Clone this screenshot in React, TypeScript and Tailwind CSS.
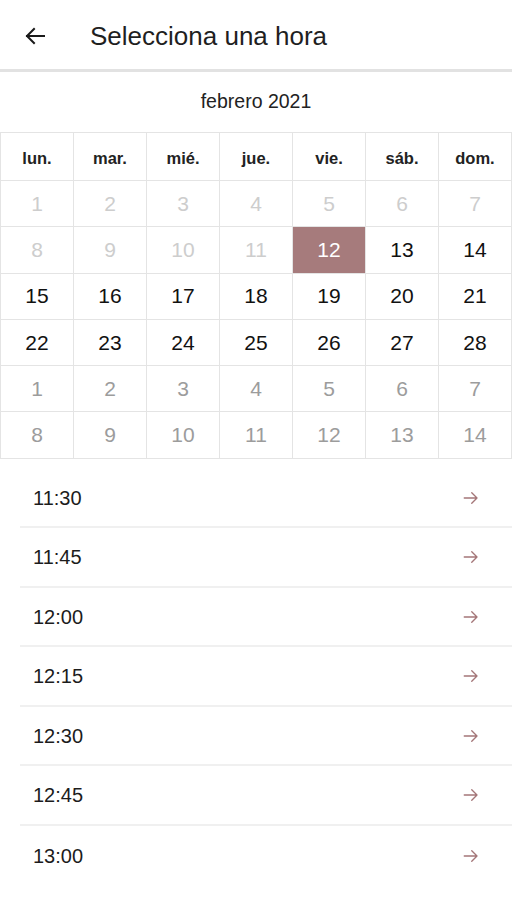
import React, { useState } from "react";

type Day = { n: number; tone: "off" | "on" | "next" };

const WEEKDAYS = ["lun.", "mar.", "mié.", "jue.", "vie.", "sáb.", "dom."];
const TIMES = ["11:30", "11:45", "12:00", "12:15", "12:30", "12:45", "13:00"];

// February 2021 starts on a Monday, 28 days, then a trailing fortnight of March
function buildDays(): Day[] {
  const days: Day[] = [];
  for (let i = 1; i <= 28; i++) days.push({ n: i, tone: i < 12 ? "off" : "on" });
  for (let i = 1; i <= 14; i++) days.push({ n: i, tone: "next" });
  return days;
}

const BackIcon = () => (
  <svg width="24" height="24" viewBox="0 0 24 24" fill="none" stroke="#1a1a1a" strokeWidth="2" strokeLinecap="square">
    <path d="M21 12H4M11 5l-7 7 7 7" />
  </svg>
);

const ArrowIcon = () => (
  <svg width="18" height="18" viewBox="0 0 24 24" fill="none" stroke="#a47678" strokeWidth="1.8" strokeLinecap="round" strokeLinejoin="round">
    <path d="M3 12h17M13 5l7 7-7 7" />
  </svg>
);

export default function App() {
  const [selected, setSelected] = useState(12);
  const days = buildDays();

  return (
    <div className="w-[512px] h-[900px] bg-white overflow-hidden" style={{ fontFamily: '"Liberation Sans", Arial, sans-serif' }}>
      {/* top bar */}
      <div className="h-[72px] flex items-center pt-[3px] border-b-[3px] border-[#e2e2e2]">
        <button className="ml-[23px] w-[24px] h-[24px] flex items-center justify-center">
          <BackIcon />
        </button>
        <h1 className="ml-[43px] text-[26px] text-[#1f1f1f]">Selecciona una hora</h1>
      </div>

      <div className="h-[60px] flex items-center justify-center text-[19.5px] text-[#222]">febrero 2021</div>

      {/* calendar */}
      <div className="grid grid-cols-7 border-t border-l border-[#e4e4e4]">
        {WEEKDAYS.map((d) => (
          <div key={d} className="h-[48px] flex items-center justify-center pt-[3px] border-r border-b border-[#e4e4e4] text-[16.5px] font-bold text-[#222]">
            {d}
          </div>
        ))}
        {days.map((d, i) => {
          const isSel = d.tone === "on" && d.n === selected;
          return (
            <div
              key={i}
              onClick={() => d.tone === "on" && setSelected(d.n)}
              className={
                "h-[46.3px] flex items-center justify-center border-r border-b border-[#e4e4e4] text-[21px] " +
                (isSel
                  ? "bg-[#a67b7c] text-white"
                  : d.tone === "on"
                  ? "text-[#111]"
                  : d.tone === "off"
                  ? "text-[#cdcdcd]"
                  : "text-[#9c9c9c]")
              }
            >
              {d.n}
            </div>
          );
        })}
      </div>

      {/* time slots */}
      <div className="ml-[20px] mt-[10px]">
        {TIMES.map((t, i) => (
          <div
            key={t}
            className={
              "h-[59.5px] flex items-center justify-between pl-[13px] pr-[32px] " +
              (i < TIMES.length - 1 ? "border-b-2 border-[#f0f0f0]" : "")
            }
          >
            <span className="text-[20px] text-[#1c1c1c]">{t}</span>
            <ArrowIcon />
          </div>
        ))}
      </div>
    </div>
  );
}
